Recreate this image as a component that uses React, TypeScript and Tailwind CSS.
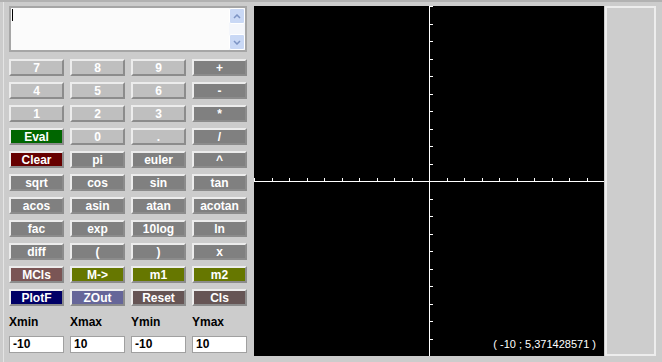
import React from 'react';

const rows: string[][] = [
  ['7', '8', '9', '+'],
  ['4', '5', '6', '-'],
  ['1', '2', '3', '*'],
  ['Eval', '0', '.', '/'],
  ['Clear', 'pi', 'euler', '^'],
  ['sqrt', 'cos', 'sin', 'tan'],
  ['acos', 'asin', 'atan', 'acotan'],
  ['fac', 'exp', '10log', 'ln'],
  ['diff', '(', ')', 'x'],
  ['MCls', 'M->', 'm1', 'm2'],
  ['PlotF', 'ZOut', 'Reset', 'Cls'],
];

const colors: Record<string, string> = {
  Eval: 'bg-[#006600]',
  Clear: 'bg-[#660000]',
  MCls: 'bg-[#7a5555]',
  'M->': 'bg-[#667700]',
  m1: 'bg-[#667700]',
  m2: 'bg-[#667700]',
  PlotF: 'bg-[#000066]',
  ZOut: 'bg-[#666699]',
  Reset: 'bg-[#665555]',
  Cls: 'bg-[#665555]',
};

const digits = ['0', '1', '2', '3', '4', '5', '6', '7', '8', '9', '.'];

function Key({ label }: { label: string }) {
  const bg = colors[label] ?? (digits.includes(label) ? 'bg-[#bfbfbf]' : 'bg-[#808080]');
  return (
    <button
      className={`${bg} h-[17px] flex items-center justify-center border-2 border-t-[#ececec] border-l-[#ececec] border-r-[#8c8c8c] border-b-[#8c8c8c] text-white text-[12px] font-bold leading-none`}
      style={{ fontFamily: '"Liberation Sans", Arial, sans-serif' }}
    >
      {label}
    </button>
  );
}

function Graph() {
  const ticks = Array.from({ length: 21 }, (_, i) => (i - 10) * 17.5 + 175);
  return (
    <div className="relative w-[350px] h-[350px] bg-black ml-[7px]">
      <svg width="350" height="350" shapeRendering="crispEdges" className="block">
        <line x1="175.5" y1="0" x2="175.5" y2="350" stroke="#fff" />
        <line x1="0" y1="175.5" x2="350" y2="175.5" stroke="#fff" />
        {ticks.map((t) => (
          <g key={t}>
            <line x1={Math.round(t) + 0.5} y1="172" x2={Math.round(t) + 0.5} y2="175" stroke="#fff" />
            <line x1="176" y1={Math.round(t) + 0.5} x2="179" y2={Math.round(t) + 0.5} stroke="#fff" />
          </g>
        ))}
      </svg>
      <span
        className="absolute right-[8px] bottom-[6px] text-white text-[11px] leading-none"
        style={{ fontFamily: '"Liberation Sans", Arial, sans-serif' }}
      >
        ( -10 ; 5,371428571 )
      </span>
    </div>
  );
}

export default function App() {
  const font = { fontFamily: '"Liberation Sans", Arial, sans-serif' };
  return (
    <div className="w-[662px] h-[362px] bg-[#cccccc] border-t-2 border-[#b2b2b2] flex pl-[3px]" style={font}>
      <div className="border-l border-[#e4e4e4] pl-[5px] pt-[4px]">
        <div className="w-[238px] h-[46px] bg-[#fbfbfb] border-2 border-[#a6a6a6] flex">
          <div className="flex-1 pt-[1px] pl-[1px]">
            <div className="w-px h-[12px] bg-black" />
          </div>
          <div className="w-[16px] bg-[#f4f6fb] flex flex-col justify-between">
            <div className="h-[16px] bg-[#c9d8f5] border border-white rounded-[2px] flex items-center justify-center">
              <svg width="8" height="5" viewBox="0 0 8 5"><path d="M1 4 L4 1 L7 4" fill="none" stroke="#7d94c4" strokeWidth="1.5" /></svg>
            </div>
            <div className="h-[16px] bg-[#c9d8f5] border border-white rounded-[2px] flex items-center justify-center">
              <svg width="8" height="5" viewBox="0 0 8 5"><path d="M1 1 L4 4 L7 1" fill="none" stroke="#7d94c4" strokeWidth="1.5" /></svg>
            </div>
          </div>
        </div>
        <div className="mt-[7px] w-[238px] grid grid-cols-4 gap-x-[6px] gap-y-[6px]">
          {rows.flat().map((l) => (
            <Key key={l} label={l} />
          ))}
        </div>
        <div className="mt-[9px] w-[238px] grid grid-cols-4 gap-x-[6px] h-[14px] text-[12px] font-bold text-black leading-[14px]">
          <span>Xmin</span>
          <span>Xmax</span>
          <span>Ymin</span>
          <span>Ymax</span>
        </div>
        <div className="mt-[7px] w-[238px] grid grid-cols-4 gap-x-[6px]">
          {['-10', '10', '-10', '10'].map((v, i) => (
            <div
              key={i}
              className="h-[17px] bg-white border border-[#a0a0a0] pl-[3px] text-[12px] font-bold text-black leading-[15px]"
            >
              {v}
            </div>
          ))}
        </div>
      </div>
      <div className="pt-[4px] flex">
        <Graph />
        <div className="ml-[1px] w-[51px] h-[350px] bg-[#cdcdcd] border-2 border-[#ededed]" />
      </div>
    </div>
  );
}
